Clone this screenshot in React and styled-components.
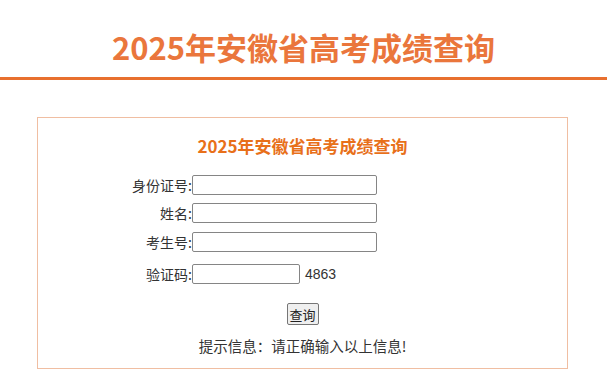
import React, { useState } from "react";
import styled, { createGlobalStyle } from "styled-components";

const GlobalStyle = createGlobalStyle`
  body {
    margin: 0;
    background: #ffffff;
    font-family: "Liberation Sans", "Noto Sans CJK SC", sans-serif;
    color: #333;
  }
`;

const Header = styled.header`
  height: 77px;
  display: flex;
  align-items: center;
  justify-content: center;
  border-bottom: 3px solid #e8702f;
`;

const HeaderTitle = styled.h1`
  margin: 0;
  padding-top: 16px;
  font-family: "Noto Sans CJK SC", sans-serif;
  font-size: 31px;
  font-weight: 700;
  color: #ea763c;
`;

const Panel = styled.section`
  margin: 37px 39px 0 37px;
  height: 250px;
  border: 1px solid #f0bea2;
  display: flex;
  flex-direction: column;
  align-items: center;
`;

const PanelTitle = styled.h2`
  margin: 16px 0 0;
  line-height: 24px;
  font-family: "Noto Sans CJK SC", sans-serif;
  font-size: 17px;
  font-weight: 700;
  color: #e8701a;
`;

const Form = styled.form`
  align-self: stretch;
  margin-top: 17px;
  display: flex;
  flex-direction: column;
`;

const Row = styled.div`
  display: grid;
  grid-template-columns: 154px auto;
  align-items: center;
  height: 20px;
  margin-bottom: ${(p) => p.gap}px;
`;

const Label = styled.label`
  text-align: right;
  font-family: "Noto Sans CJK SC", sans-serif;
  font-size: 14px;
  color: #333;
  white-space: nowrap;
`;

const Field = styled.div`
  display: flex;
  align-items: center;
  gap: 5px;
`;

const Input = styled.input`
  box-sizing: border-box;
  width: ${(p) => p.w}px;
  height: 20px;
  border: 1px solid #858585;
  border-radius: 2px;
  padding: 0 4px;
  background: #fff;
  font-size: 13px;
  &:focus {
    outline: none;
  }
`;

const Code = styled.span`
  font-family: "Liberation Sans", sans-serif;
  font-size: 14px;
  color: #333;
`;

const Actions = styled.div`
  display: flex;
  justify-content: center;
  margin-top: 19px;
`;

const Button = styled.button`
  box-sizing: border-box;
  width: 32px;
  height: 22px;
  padding: 0;
  border: 1px solid #767676;
  border-radius: 2px;
  background: #efefef;
  font-family: "Noto Sans CJK SC", sans-serif;
  font-size: 13px;
  color: #222;
`;

const Hint = styled.p`
  margin: 10px 0 0;
  text-align: center;
  font-family: "Noto Sans CJK SC", sans-serif;
  font-size: 14.5px;
  color: #333;
`;

const rows = [
  { label: "身份证号:", width: 185, gap: 8 },
  { label: "姓名:", width: 185, gap: 9 },
  { label: "考生号:", width: 185, gap: 12 },
];

export default function App() {
  const [values, setValues] = useState({});

  return (
    <>
      <GlobalStyle />
      <Header>
        <HeaderTitle>2025年安徽省高考成绩查询</HeaderTitle>
      </Header>
      <Panel>
        <PanelTitle>2025年安徽省高考成绩查询</PanelTitle>
        <Form onSubmit={(e) => e.preventDefault()}>
          {rows.map((r) => (
            <Row key={r.label} gap={r.gap}>
              <Label>{r.label}</Label>
              <Field>
                <Input
                  w={r.width}
                  value={values[r.label] ?? ""}
                  onChange={(e) =>
                    setValues({ ...values, [r.label]: e.target.value })
                  }
                />
              </Field>
            </Row>
          ))}
          <Row gap={0}>
            <Label>验证码:</Label>
            <Field>
              <Input
                w={108}
                value={values.code ?? ""}
                onChange={(e) => setValues({ ...values, code: e.target.value })}
              />
              <Code>4863</Code>
            </Field>
          </Row>
          <Actions>
            <Button type="submit">查询</Button>
          </Actions>
          <Hint>提示信息：请正确输入以上信息!</Hint>
        </Form>
      </Panel>
    </>
  );
}
